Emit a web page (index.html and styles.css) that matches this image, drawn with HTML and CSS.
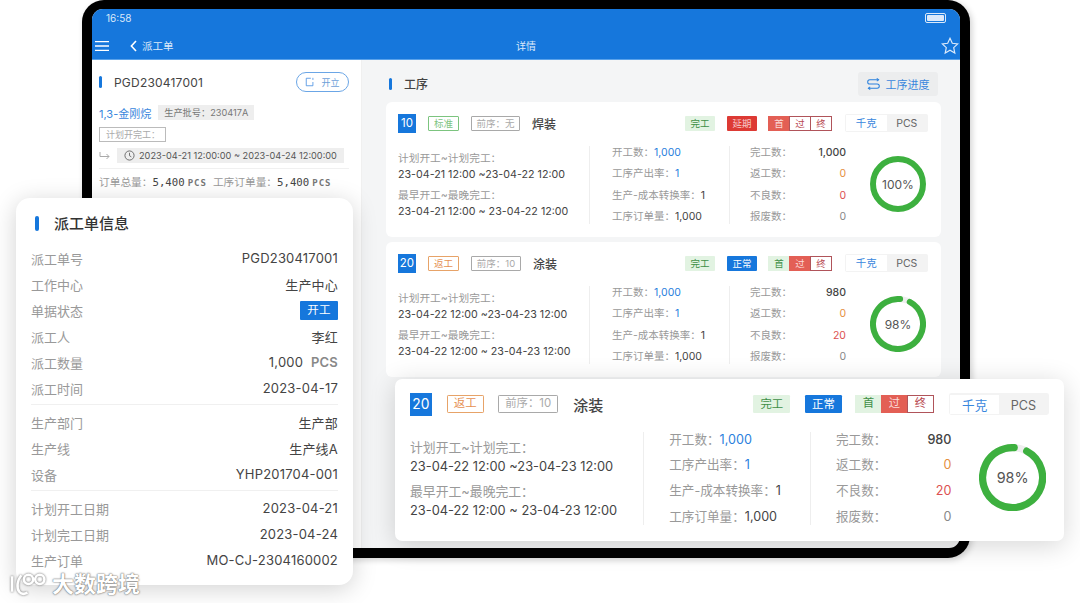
FILE: index.html
```html
<!DOCTYPE html>
<html lang="zh-CN">
<head>
    <meta charset="UTF-8">
    <meta name="viewport" content="width=device-width, initial-scale=1.0">
    <title>派工单详情</title>
    <link rel="stylesheet" href="styles.css">
</head>
<body>
    <div class="stage">
        <div class="tablet">
            <div class="screen">
                <div class="topbar">
                    <div class="status-row">
                        <span class="clock">16:58</span>
                        <span class="battery"><i></i></span>
                    </div>
                    <div class="nav-row">
                        <svg class="menu-icon" viewBox="0 0 14 10"><path d="M0 .7h14M0 5h14M0 9.3h14"/></svg>
                        <svg class="back-icon" viewBox="0 0 7 12"><path d="M6 1 1.4 6 6 11"/></svg>
                        <span class="back-label">派工单</span>
                        <span class="nav-title">详情</span>
                        <svg class="star-icon" viewBox="0 0 18 18"><path d="M9 1.3l2.3 5 5.4.6-4 3.7 1.1 5.4L9 13.3 4.2 16l1.1-5.4-4-3.7 5.4-.6z"/></svg>
                    </div>
                </div>
                <div class="content">
                    <div class="side">
                        <div class="side-head">
                            <span class="bar"></span>
                            <span class="side-no">PGD230417001</span>
                            <span class="open-btn">
                                <svg viewBox="0 0 12 12"><path d="M7 1.5H1.5v9h8V6"/><path d="M9.5 1v2.5"/></svg>
                                开立
                            </span>
                        </div>
                        <div class="side-line">
                            <span class="side-name">1,3-金刚烷</span>
                            <span class="grey-tag">生产批号：230417A</span>
                        </div>
                        <div class="plan-tag">计划开完工：</div>
                        <div class="side-line date-line">
                            <svg class="turn-icon" viewBox="0 0 11 8"><path d="M1 0v4.5h9M7.5 2l2.5 2.5L7.5 7"/></svg>
                            <span class="grey-tag date-tag">
                                <svg viewBox="0 0 12 12"><circle cx="6" cy="6" r="5"/><path d="M6 3v3.2l2 1.3"/></svg>
                                2023-04-21 12:00:00 ~ 2023-04-24 12:00:00
                            </span>
                        </div>
                        <div class="side-total">
                            订单总量：<b>5,400</b> <small>PCS</small>工序订单量：<b>5,400</b> <small>PCS</small>
                        </div>
                    </div>
                    <div class="main">
                        <div class="main-head">
                            <span class="bar"></span>
                            <span class="main-title">工序</span>
                            <span class="progress-btn">
                                <svg viewBox="0 0 14 12"><path d="M12.5 1.5H3a2.2 2.2 0 0 0 0 4.5h8a2.2 2.2 0 0 1 0 4.5H1.5"/><path d="M10.5 0l2 1.5-2 1.5M3.5 9l-2 1.5 2 1.5"/></svg>
                                工序进度
                            </span>
                        </div>

                        <div class="proc-card">
                            <div class="proc-head">
                                <span class="proc-no">10</span>
                                <span class="kind kind-green">标准</span>
                                <span class="kind kind-grey prev-w1">前序：无</span>
                                <span class="proc-name">焊装</span>
                                <span class="state state-done">完工</span>
                                <span class="state state-late">延期</span>
                                <span class="checks">
                                    <i class="chk-red">首</i><i class="chk-white">过</i><i class="chk-white">终</i>
                                </span>
                                <span class="unit-tabs"><i class="on">千克</i><i>PCS</i></span>
                            </div>
                            <div class="proc-body">
                                <div class="times">
                                    <div>
                                        <p class="lbl">计划开工~计划完工：</p>
                                        <p>23-04-21 12:00 ~23-04-22 12:00</p>
                                    </div>
                                    <div>
                                        <p class="lbl">最早开工~最晚完工：</p>
                                        <p>23-04-21 12:00 ~ 23-04-22 12:00</p>
                                    </div>
                                </div>
                                <div class="stats-mid">
                                    <p><span class="lbl">开工数：</span><span class="blue">1,000</span></p>
                                    <p><span class="lbl">工序产出率：</span><span class="blue">1</span></p>
                                    <p><span class="lbl">生产-成本转换率：</span>1</p>
                                    <p><span class="lbl">工序订单量：</span>1,000</p>
                                </div>
                                <div class="stats-right">
                                    <p><span class="lbl">完工数：</span><b>1,000</b></p>
                                    <p><span class="lbl">返工数：</span><span class="orange">0</span></p>
                                    <p><span class="lbl">不良数：</span><span class="red">0</span></p>
                                    <p><span class="lbl">报废数：</span><span class="grey">0</span></p>
                                </div>
                                <div class="ring">
                                    <svg viewBox="0 0 56 56"><circle class="ring-val" cx="28" cy="28" r="25"/></svg>
                                    <span>100%</span>
                                </div>
                            </div>
                        </div>

                        <div class="proc-card">
                            <div class="proc-head">
                                <span class="proc-no">20</span>
                                <span class="kind kind-orange">返工</span>
                                <span class="kind kind-grey prev-w2">前序：10</span>
                                <span class="proc-name">涂装</span>
                                <span class="state state-done">完工</span>
                                <span class="state state-ok">正常</span>
                                <span class="checks">
                                    <i class="chk-green">首</i><i class="chk-red">过</i><i class="chk-white">终</i>
                                </span>
                                <span class="unit-tabs"><i class="on">千克</i><i>PCS</i></span>
                            </div>
                            <div class="proc-body">
                                <div class="times">
                                    <div>
                                        <p class="lbl">计划开工~计划完工：</p>
                                        <p>23-04-22 12:00 ~23-04-23 12:00</p>
                                    </div>
                                    <div>
                                        <p class="lbl">最早开工~最晚完工：</p>
                                        <p>23-04-22 12:00 ~ 23-04-23 12:00</p>
                                    </div>
                                </div>
                                <div class="stats-mid">
                                    <p><span class="lbl">开工数：</span><span class="blue">1,000</span></p>
                                    <p><span class="lbl">工序产出率：</span><span class="blue">1</span></p>
                                    <p><span class="lbl">生产-成本转换率：</span>1</p>
                                    <p><span class="lbl">工序订单量：</span>1,000</p>
                                </div>
                                <div class="stats-right">
                                    <p><span class="lbl">完工数：</span><b>980</b></p>
                                    <p><span class="lbl">返工数：</span><span class="orange">0</span></p>
                                    <p><span class="lbl">不良数：</span><span class="red">20</span></p>
                                    <p><span class="lbl">报废数：</span><span class="grey">0</span></p>
                                </div>
                                <div class="ring">
                                    <svg viewBox="0 0 56 56"><circle class="ring-track" cx="28" cy="28" r="25"/><circle class="ring-val ring-98" cx="28" cy="28" r="25"/></svg>
                                    <span>98%</span>
                                </div>
                            </div>
                        </div>
                    </div>
                </div>
            </div>
        </div>

        <!-- floating: order info -->
        <div class="info-card">
            <div class="info-title"><span class="bar"></span>派工单信息</div>
            <div class="info-row"><span>派工单号</span><em>PGD230417001</em></div>
            <div class="info-row"><span>工作中心</span><em>生产中心</em></div>
            <div class="info-row"><span>单据状态</span><em class="status-pill">开工</em></div>
            <div class="info-row"><span>派工人</span><em>李红</em></div>
            <div class="info-row"><span>派工数量</span><em>1,000 <b>PCS</b></em></div>
            <div class="info-row"><span>派工时间</span><em>2023-04-17</em></div>
            <hr class="info-line">
            <div class="info-row"><span>生产部门</span><em>生产部</em></div>
            <div class="info-row"><span>生产线</span><em>生产线A</em></div>
            <div class="info-row"><span>设备</span><em>YHP201704-001</em></div>
            <hr class="info-line">
            <div class="info-row"><span>计划开工日期</span><em>2023-04-21</em></div>
            <div class="info-row"><span>计划完工日期</span><em>2023-04-24</em></div>
            <div class="info-row"><span>生产订单</span><em>MO-CJ-2304160002</em></div>
        </div>

        <!-- floating: enlarged process card -->
        <div class="proc-card proc-big">
            <div class="proc-head">
                <span class="proc-no">20</span>
                <span class="kind kind-orange">返工</span>
                <span class="kind kind-grey prev-w2">前序：10</span>
                <span class="proc-name">涂装</span>
                <span class="state state-done">完工</span>
                <span class="state state-ok">正常</span>
                <span class="checks">
                    <i class="chk-green">首</i><i class="chk-red">过</i><i class="chk-white">终</i>
                </span>
                <span class="unit-tabs"><i class="on">千克</i><i>PCS</i></span>
            </div>
            <div class="proc-body">
                <div class="times">
                    <div>
                        <p class="lbl">计划开工~计划完工：</p>
                        <p>23-04-22 12:00 ~23-04-23 12:00</p>
                    </div>
                    <div>
                        <p class="lbl">最早开工~最晚完工：</p>
                        <p>23-04-22 12:00 ~ 23-04-23 12:00</p>
                    </div>
                </div>
                <div class="stats-mid">
                    <p><span class="lbl">开工数：</span><span class="blue">1,000</span></p>
                    <p><span class="lbl">工序产出率：</span><span class="blue">1</span></p>
                    <p><span class="lbl">生产-成本转换率：</span>1</p>
                    <p><span class="lbl">工序订单量：</span>1,000</p>
                </div>
                <div class="stats-right">
                    <p><span class="lbl">完工数：</span><b>980</b></p>
                    <p><span class="lbl">返工数：</span><span class="orange">0</span></p>
                    <p><span class="lbl">不良数：</span><span class="red">20</span></p>
                    <p><span class="lbl">报废数：</span><span class="grey">0</span></p>
                </div>
                <div class="ring">
                    <svg viewBox="0 0 56 56"><circle class="ring-track" cx="28" cy="28" r="25"/><circle class="ring-val ring-98" cx="28" cy="28" r="25"/></svg>
                    <span>98%</span>
                </div>
            </div>
        </div>

        <div class="watermark">
            <svg viewBox="0 0 38 24"><path d="M3 4v15M12 3C8 8 7 15 10 19c2 2.500 5 2.500 8 1"/><circle cx="19" cy="7" r="4.500"/><circle cx="30" cy="7" r="4.500"/></svg>
            <span>大数跨境</span>
        </div>
    </div>
</body>
</html>
```

FILE: styles.css
```css
* {
    box-sizing: border-box;
}
html, body {
    margin: 0;
    padding: 0;
    background: #fff;
}
body {
    font-family: Inter, "Noto Sans CJK SC", "Noto Sans", sans-serif;
    color: #444;
}
p {
    margin: 0;
}
i, em {
    font-style: normal;
}
.stage {
    position: relative;
    width: 1080px;
    height: 603px;
    overflow: hidden;
}
.bar {
    display: block;
    width: 3px;
    border-radius: 2px;
    background: #1677dc;
}

/* tablet */
.tablet {
    margin-left: 82px;
    width: 888px;
    height: 558px;
    padding: 9px 10px 10px;
    background: #000;
    border-radius: 22px;
    box-shadow: 2px 2px 6px rgba(0,0,0,.18);
}
.screen {
    height: 100%;
    overflow: hidden;
    border-radius: 11px;
    background: #f4f5f6;
    display: flex;
    flex-direction: column;
}
.topbar {
    height: 51px;
    flex: none;
    background: #1677dc;
    color: #fff;
    border-bottom: 1px solid #5aa2ea;
}
.status-row {
    height: 18px;
    padding: 0 14px;
    display: flex;
    justify-content: space-between;
    align-items: center;
}
.clock {
    font-size: 10px;
    color: #dbe9fa;
}
.battery {
    width: 21px;
    height: 10px;
    border: 1px solid #dbe9fa;
    border-radius: 2px;
    padding: 1px;
    display: block;
}
.battery i {
    display: block;
    height: 100%;
    background: #dbe9fa;
    border-radius: 1px;
}
.nav-row {
    position: relative;
    height: 32px;
    display: flex;
    align-items: center;
    padding-left: 3px;
    padding-top: 5px;
}
.menu-icon {
    width: 14px;
    height: 10px;
    fill: none;
    stroke: #fff;
    stroke-width: 1.3;
}
.back-icon {
    width: 7px;
    height: 12px;
    margin-left: 21px;
    fill: none;
    stroke: #fff;
    stroke-width: 1.6;
}
.back-label {
    margin-left: 5px;
    font-size: 10.500px;
    color: #dbe9fa;
}
.nav-title {
    position: absolute;
    left: 0;
    right: 0;
    text-align: center;
    font-size: 10px;
    color: #dbe9fa;
}
.star-icon {
    width: 18px;
    height: 18px;
    margin-left: auto;
    margin-right: 1px;
    fill: none;
    stroke: #dbe9fa;
    stroke-width: 1.2;
}
.content {
    flex: 1;
    display: flex;
    min-height: 0;
}

/* left list panel */
.side {
    width: 269px;
    flex: none;
    background: #fff;
    padding: 12px 12px 0 7px;
}
.side-head {
    height: 20px;
    display: flex;
    align-items: center;
}
.side-head .bar {
    height: 12px;
}
.side-no {
    margin-left: 12px;
    font-size: 12px;
    letter-spacing: .2px;
    color: #444;
}
.open-btn {
    margin-left: auto;
    width: 53px;
    height: 20px;
    border: 1px solid #6ba6e6;
    border-radius: 10px;
    display: flex;
    align-items: center;
    justify-content: center;
    gap: 6px;
    font-size: 9px;
    color: #6d9fd8;
}
.open-btn svg {
    width: 10px;
    height: 10px;
    fill: none;
    stroke: #4a90e2;
    stroke-width: 1;
}
.side-line {
    margin-top: 13px;
    height: 15px;
    display: flex;
    align-items: center;
    gap: 7px;
}
.side-name {
    font-size: 11px;
    color: #3a87dd;
}
.grey-tag {
    height: 15px;
    line-height: 15px;
    padding: 0 6px;
    background: #eee;
    font-size: 9.200px;
    color: #777;
}
.plan-tag {
    margin-top: 7px;
    width: 67px;
    height: 15px;
    line-height: 13px;
    padding-left: 6px;
    border: 1px solid #bbb;
    font-size: 9px;
    color: #aaa;
}
.date-line {
    margin-top: 6px;
}
.turn-icon {
    width: 11px;
    height: 8px;
    fill: none;
    stroke: #aaa;
    stroke-width: 1;
}
.date-tag {
    width: 227px;
    padding: 0 0 0 7px;
    display: flex;
    align-items: center;
    gap: 4px;
    color: #555;
}
.date-tag svg {
    width: 11px;
    height: 11px;
    fill: none;
    stroke: #666;
    stroke-width: 1;
}
.side-total {
    margin-top: 5px;
    padding-top: 6px;
    height: 28px;
    width: 250px;
    border-top: 1px solid #f0f0f0;
    font-size: 10.700px;
    line-height: 16px;
    color: #999;
    white-space: nowrap;
}
.side-total b {
    font-family: "DejaVu Sans Mono", monospace;
    font-weight: 400;
    color: #444;
    font-size: 10.700px;
}
.side-total small {
    font-family: "DejaVu Sans Mono", monospace;
    font-size: 9px;
    font-weight: 600;
    letter-spacing: 1px;
    margin-right: 6px;
    color: #777;
}

/* right process panel */
.main {
    flex: 1;
    padding: 12px 19px 0 25px;
    box-shadow: inset 1px 0 0 #f0f0f0;
}
.main-head {
    height: 24px;
    margin-bottom: 6px;
    display: flex;
    align-items: center;
    padding: 0 3px;
}
.main-head .bar {
    height: 12px;
}
.main-title {
    margin: 0 0 2px 12px;
    font-size: 12px;
    font-weight: 500;
    color: #444;
}
.progress-btn {
    margin-left: auto;
    width: 80px;
    height: 24px;
    border-radius: 3px;
    background: #ecedee;
    display: flex;
    align-items: center;
    justify-content: center;
    gap: 6px;
    font-size: 11px;
    color: #3a87dd;
}
.progress-btn svg {
    width: 13px;
    height: 12px;
    fill: none;
    stroke: #2a80dd;
    stroke-width: 1.1;
}

/* process card, used three times */
.proc-card {
    width: 555px;
    height: 135px;
    margin-bottom: 5px;
    padding: 12px 13px 0 12px;
    background: #fff;
    border-radius: 6px;
    font-size: 11px;
}
.proc-head {
    height: 18px;
    display: flex;
    align-items: center;
}
.proc-no {
    width: 18px;
    height: 19px;
    line-height: 19px;
    text-align: center;
    background: #1677dc;
    color: #fff;
    font-size: 11.500px;
}
.kind {
    height: 15px;
    line-height: 13px;
    text-align: center;
    border: 1px solid;
    border-radius: 1px;
    font-size: 9.500px;
}
.kind-green {
    width: 31px;
    margin-left: 12px;
    border-color: #7cc47f;
    color: #7cc47f;
}
.kind-orange {
    width: 31px;
    margin-left: 12px;
    border-color: #e7a368;
    color: #e59052;
}
.kind-grey {
    margin-left: 12px;
    border-color: #a9a9a9;
    color: #aaa;
}
.prev-w1 {
    width: 49px;
}
.prev-w2 {
    width: 50px;
}
.proc-name {
    margin-left: 12px;
    font-size: 12px;
    font-weight: 500;
    color: #444;
}
.state {
    width: 30px;
    height: 15px;
    line-height: 15px;
    text-align: center;
    border-radius: 1px;
    font-size: 9.500px;
    margin-right: 12px;
}
.state-done {
    margin-left: auto;
    background: #e2f3e2;
    color: #3f8f46;
}
.state-late {
    background: #dd3a34;
    color: #f7c8c6;
}
.state-ok {
    background: #1677dc;
    color: #fff;
}
.checks {
    display: flex;
    width: 63px;
    height: 15px;
    font-size: 9.500px;
    line-height: 13px;
    text-align: center;
}
.checks i {
    flex: 1;
    border: 1px solid #e2f3e2;
    margin-left: -1px;
}
.chk-green {
    background: #e2f3e2;
    color: #3f8f46;
}
.chk-red {
    background: #e35f55;
    color: #fbdcd9;
    border-color: #e35f55 !important;
}
.chk-white {
    background: #fff;
    color: #b8474f;
    border-color: #b0545a !important;
}
.unit-tabs {
    margin-left: 13px;
    width: 83px;
    height: 18px;
    padding: 1px;
    display: flex;
    background: #f3f3f3;
    border-radius: 2px;
    font-size: 10.500px;
    line-height: 18px;
    text-align: center;
    color: #666;
}
.unit-tabs i {
    flex: 1;
}
.unit-tabs .on {
    background: #fff;
    color: #3a87dd;
}
.proc-body {
    margin-top: 14px;
    height: 78px;
    display: flex;
}
.lbl {
    color: #999;
}
.blue {
    color: #2a80dd;
}
.orange {
    color: #e59040;
}
.red {
    color: #dc5050;
}
.grey {
    color: #888;
}
.times {
    width: 191px;
    flex: none;
    padding-top: 5px;
    display: flex;
    flex-direction: column;
    gap: 5px;
    line-height: 16px;
    font-size: 10.700px;
    white-space: nowrap;
}
.stats-mid,
.stats-right {
    flex: none;
    border-left: 1px solid #eee;
    display: flex;
    flex-direction: column;
    justify-content: space-between;
    line-height: 14px;
    white-space: nowrap;
    font-size: 10.500px;
}
.stats-mid {
    width: 140px;
    padding-left: 22px;
}
.stats-right {
    width: 117px;
    padding-left: 20px;
}
.stats-right p {
    display: flex;
    justify-content: space-between;
}
.stats-right b {
    font-weight: 500;
}
.ring {
    position: relative;
    width: 56px;
    height: 56px;
    margin: 10px 0 0 24px;
    display: flex;
    align-items: center;
    justify-content: center;
    font-size: 12px;
    color: #555;
}
.ring svg {
    position: absolute;
    inset: 0;
    fill: none;
    stroke-width: 6;
}
.ring-track {
    stroke: #eee;
}
.ring-val {
    stroke: #3db03f;
}
.ring-98 {
    stroke-linecap: round;
    stroke-dasharray: 146 157;
    transform: rotate(-62deg);
    transform-origin: 28px 28px;
}

/* enlarged card sits over the tablet */
.proc-big {
    position: absolute;
    zoom: 1.2;
    left: 329.170px;
    top: 315.830px;
    width: 557.500px;
    height: 135px;
    margin: 0;
    padding: 12px 12.500px 0 12.500px;
    box-shadow: 0 4px 22px rgba(0,0,0,.16);
}
.proc-big .kind-orange {
    margin-left: 12.500px;
}
.proc-big .proc-name {
    margin-left: 12.500px;
    font-size: 12.500px;
}
.proc-big .state {
    width: 31px;
}
.proc-big .state-ok {
    margin-right: 11.700px;
}
.proc-big .checks {
    width: 65px;
}
.proc-big .unit-tabs {
    margin-left: 12.500px;
    width: 83.300px;
}
.proc-big .times {
    width: 194.200px;
}
.proc-big .stats-mid {
    width: 139px;
    padding-left: 21px;
}
.proc-big .stats-right {
    width: 118px;
    padding-left: 21px;
}
.proc-big .ring {
    margin-left: 23px;
}

/* floating info card */
.info-card {
    position: absolute;
    left: 16px;
    top: 198px;
    width: 337px;
    height: 387px;
    padding: 17px 15px 0;
    background: #fff;
    border-radius: 14px;
    box-shadow: 0 4px 24px rgba(0,0,0,.18);
    font-size: 13px;
}
.info-title {
    height: 30px;
    display: flex;
    align-items: flex-start;
    padding-left: 4px;
    font-size: 15px;
    font-weight: 500;
    line-height: 17px;
    color: #333;
}
.info-title .bar {
    height: 15px;
    width: 4px;
    margin: 1px 15px 0 0;
}
.info-row {
    height: 26px;
    display: flex;
    justify-content: space-between;
    align-items: center;
    color: #999;
    white-space: nowrap;
}
.info-row em {
    color: #444;
    letter-spacing: .2px;
}
.info-row b {
    margin-left: 4px;
    font-weight: 600;
    color: #888;
}
.status-pill {
    width: 38px;
    height: 19px;
    line-height: 19px;
    text-align: center;
    background: #1677dc;
    border-radius: 1px;
    font-size: 11.500px;
    color: #fff !important;
}
.info-line {
    margin: 3px 0 4px;
    height: 1px;
    border: 0;
    background: #f0f0f0;
}

/* watermark */
.watermark {
    position: absolute;
    left: 9px;
    top: 571px;
    display: flex;
    align-items: center;
    gap: 4px;
    font-size: 22px;
    font-weight: 600;
    color: #fff;
    line-height: 26px;
    text-shadow: 0 0 2px #666, 0 0 1px #666;
}
.watermark svg {
    width: 39px;
    height: 25px;
    fill: none;
    stroke: #fff;
    stroke-width: 2.500;
    filter: drop-shadow(0 0 1px #666);
}
```
